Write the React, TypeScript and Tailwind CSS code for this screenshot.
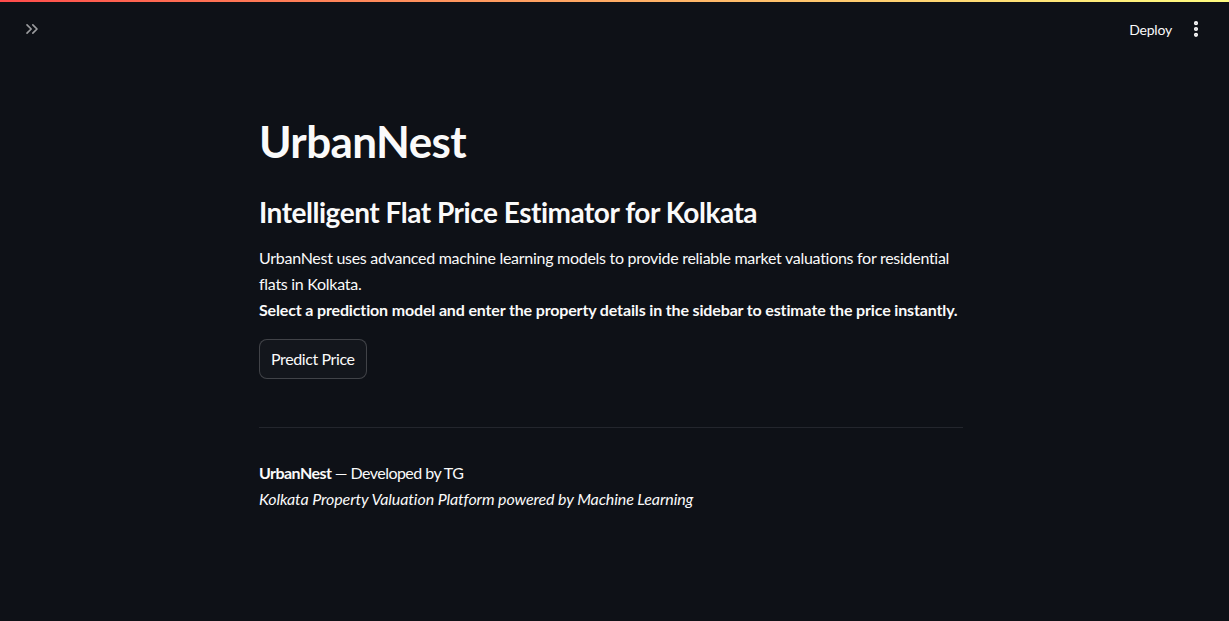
import { ChevronsRight, EllipsisVertical } from "lucide-react"

export default function App() {
  return (
    <div className="min-h-[621px] bg-[#0e1117] text-[#fafafa] font-['Lato',sans-serif]">
      <div className="h-[2px] bg-gradient-to-r from-[#ff4b4b] to-[#fffd80]" />
      <header className="flex items-center justify-between h-[54px] pl-[22px] pr-[23px]">
        <ChevronsRight className="w-5 h-5 text-[#fafafa]/60" strokeWidth={2} />
        <div className="flex items-center gap-[14px]">
          <span className="text-[14px] tracking-[-0.2px]">Deploy</span>
          <EllipsisVertical className="w-5 h-5" strokeWidth={3} />
        </div>
      </header>

      {/* main block */}
      <main className="flex justify-center pr-[7px]">
        <div className="w-[704px] pt-[59px]">
          <h1 className="text-[44px] leading-[1.2] font-bold tracking-[-0.6px]">UrbanNest</h1>
          <h2 className="mt-[28px] text-[28px] leading-[1.2] font-bold tracking-[-0.48px]">
            Intelligent Flat Price Estimator for Kolkata
          </h2>
          <p className="mt-[16px] text-[16px] leading-[25.6px] tracking-[-0.28px]">
            UrbanNest uses advanced machine learning models to provide reliable market valuations for residential
            flats in Kolkata.
            <br />
            <strong className="font-bold tracking-[-0.15px]">
              Select a prediction model and enter the property details in the sidebar to estimate the price instantly.
            </strong>
          </p>
          <button className="mt-[17px] h-[40px] px-[11px] rounded-[8px] border border-[#fafafa]/20 bg-[#13161c] text-[16px] tracking-[-0.4px]">
            Predict Price
          </button>
          <div className="mt-[48px] h-px bg-[#23262d]" />
          <div className="mt-[32px] text-[16px] leading-[25.6px] tracking-[-0.28px]">
            <p className="tracking-[-0.55px]">
              <strong className="font-bold">UrbanNest</strong> — Developed by TG
            </p>
            <p className="italic tracking-[-0.1px]">Kolkata Property Valuation Platform powered by Machine Learning</p>
          </div>
        </div>
      </main>
    </div>
  )
}
